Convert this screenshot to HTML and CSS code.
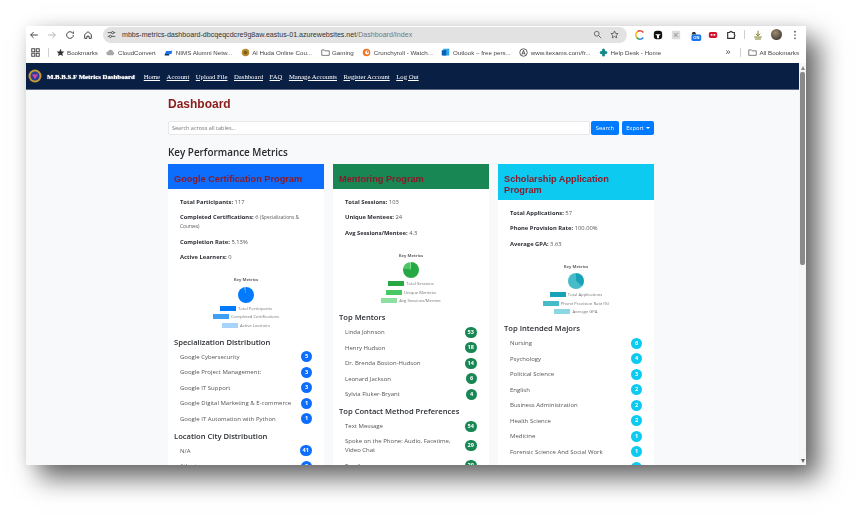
FILE: index.html
```html
<!DOCTYPE html>
<html lang="en">
<head>
    <meta charset="UTF-8">
    <meta content="width=device-width, initial-scale=1.0" name="viewport">
    <link rel="stylesheet" href="styles.css">
    <title>M.B.B.S.F Metrics Dashboard</title>
</head>
<body>

<div class="window">
    <!-- Browser toolbar -->
    <div class="toolbar">
        <svg class="tool-icon" viewBox="0 0 12 12"><path d="M10.5 6H2M5.5 2.5 2 6l3.500 3.500"/></svg>
        <svg class="tool-icon faint" viewBox="0 0 12 12"><path d="M1.500 6H10M6.500 2.500 10 6l-3.500 3.500"/></svg>
        <svg class="tool-icon" viewBox="0 0 12 12"><path d="M10 6a4 4 0 1 1-1.200-2.800L10 4.500V1.800"/></svg>
        <svg class="tool-icon" viewBox="0 0 12 12"><path d="M2 5.500 6 2l4 3.500V10H7.300V7.300H4.700V10H2z"/></svg>
        <div class="url-bar">
            <svg class="url-tune" viewBox="0 0 12 12"><path d="M1 3.500h5M9 3.500h2M3 8.500H1M6 8.500h5"/><circle cx="7.500" cy="3.500" r="1.500"/><circle cx="4.500" cy="8.500" r="1.500"/></svg>
            <span class="url-host">mbbs-metrics-dashboard-dbcqeqcdcre9g8aw.eastus-01.azurewebsites.net</span><span class="url-path">/Dashboard/Index</span>
            <svg class="url-action search-glass" viewBox="0 0 12 12"><circle cx="5" cy="5" r="3.200"/><path d="M7.500 7.500 11 11"/></svg>
            <svg class="url-action" viewBox="0 0 12 12"><path d="M6 1.300 7.400 4.500l3.400.3-2.600 2.300.8 3.400L6 8.700l-3 1.800.8-3.400L1.200 4.800l3.400-.3z"/></svg>
        </div>
        <div class="extensions">
            <svg class="ext ext-c" viewBox="0 0 12 12"><path class="c-red" d="M10 3A5 5 0 0 0 3 2"/><path class="c-yellow" d="M3 2A5 5 0 0 0 2 9"/><path class="c-green" d="M2 9a5 5 0 0 0 4 2"/><path class="c-blue" d="M6 11a5 5 0 0 0 4-2"/></svg>
            <svg class="ext" viewBox="0 0 12 12"><rect class="fill-black" x="1" y="1" width="10" height="10" rx="3.500"/><path class="fill-white" d="M2.500 5h7L7.200 7V10H4.800V7z"/></svg>
            <svg class="ext" viewBox="0 0 12 12"><rect class="fill-grey" x="1" y="1" width="10" height="10" rx="1.500"/><path class="fill-midgrey" d="M4 3.500h1.500v2L7.500 3.500H9L6.800 6 9 8.500H7.500l-2-2v2H4z"/></svg>
            <svg class="ext ext-wide" viewBox="0 0 16 14"><path class="fill-dark" d="M3 5l1.500-3h3L9 5z"/><rect class="fill-blue" x="3" y="5" width="12" height="8" rx="2"/><text class="ext-on" x="9" y="11.200">ON</text></svg>
            <svg class="ext" viewBox="0 0 12 12"><rect class="fill-red" x="1" y="2.500" width="10" height="7" rx="2"/><rect class="fill-white" x="3.300" y="4.800" width="2" height="2"/><rect class="fill-white" x="6.700" y="4.800" width="2" height="2"/></svg>
            <svg class="ext ext-puzzle" viewBox="0 0 12 12"><path d="M2 3h2.500a1.500 1.500 0 0 1 3 0H10v2.500a1.500 1.500 0 0 1 0 2.500V10H2z"/></svg>
            <span class="divider"></span>
            <svg class="ext ext-download" viewBox="0 0 12 12"><path d="M6 1v5.500M3.500 4.500 6 7l2.500-2.500M1.500 8.500h9M2.500 10.800h7"/></svg>
            <span class="avatar"></span>
            <svg class="ext ext-dots" viewBox="0 0 12 12"><circle cx="6" cy="2" r="1"/><circle cx="6" cy="6" r="1"/><circle cx="6" cy="10" r="1"/></svg>
        </div>
    </div>

    <!-- Bookmarks bar -->
    <div class="bookmarks">
        <svg class="bm-apps" viewBox="0 0 12 12"><rect x="1" y="1" width="4" height="4"/><rect x="7" y="1" width="4" height="4"/><rect x="1" y="7" width="4" height="4"/><rect x="7" y="7" width="4" height="4"/></svg>
        <span class="divider bm-sep"></span>
        <a class="bm"><svg class="bm-icon" viewBox="0 0 12 12"><path class="fill-dark" d="M6 1 7.500 4.500l3.700.3-2.800 2.400.9 3.600L6 8.900l-3.300 1.900.9-3.600L.8 4.800l3.700-.3z"/></svg>Bookmarks</a>
        <a class="bm"><svg class="bm-icon" viewBox="0 0 12 12"><path class="fill-midgrey" d="M3 9.500a2.500 2.500 0 0 1-.3-5A3.500 3.500 0 0 1 9.400 5a2.300 2.300 0 0 1-.4 4.500z"/></svg>CloudConvert</a>
        <a class="bm"><svg class="bm-icon" viewBox="0 0 12 12"><path class="fill-blue" d="M1 8 3 4h6l2-1-1 5z"/><rect class="fill-navy" x="1" y="8" width="6" height="2"/></svg>NIMS Alumni Netw...</a>
        <a class="bm"><svg class="bm-icon" viewBox="0 0 12 12"><circle class="fill-gold" cx="6" cy="6" r="5"/><circle class="fill-darkgold" cx="6" cy="6" r="2.500"/></svg>Al Huda Online Cou...</a>
        <a class="bm"><svg class="bm-icon bm-folder" viewBox="0 0 12 12"><path d="M1 2.500h3.500l1 1.300H11v6H1z"/></svg>Gaming</a>
        <a class="bm"><svg class="bm-icon" viewBox="0 0 12 12"><circle class="fill-orange" cx="6" cy="6" r="5"/><circle class="fill-white" cx="6.800" cy="6" r="2.600"/><circle class="fill-orange" cx="7.600" cy="5.200" r="1.200"/></svg>Crunchyroll - Watch...</a>
        <a class="bm"><svg class="bm-icon" viewBox="0 0 12 12"><rect class="fill-lightblue" x="3" y="1" width="8" height="9"/><rect class="fill-outlook" x="1" y="3" width="6" height="7"/></svg>Outlook – free pers...</a>
        <a class="bm"><svg class="bm-icon bm-ring" viewBox="0 0 12 12"><circle cx="6" cy="6" r="5"/><path d="M3.800 9 6 3l2.200 6M4.600 7h2.800"/></svg>www.itexams.com/fr...</a>
        <a class="bm"><svg class="bm-icon" viewBox="0 0 12 12"><circle class="fill-teal" cx="6" cy="6" r="3"/><circle class="fill-teal" cx="6" cy="2.800" r="2"/><circle class="fill-teal" cx="6" cy="9.200" r="2"/><circle class="fill-teal" cx="3" cy="6" r="2"/><circle class="fill-teal" cx="9" cy="6" r="2"/></svg>Help Desk - Home</a>
        <span class="bm-more">»</span>
        <span class="divider bm-sep"></span>
        <a class="bm bm-all"><svg class="bm-icon bm-folder" viewBox="0 0 12 12"><path d="M1 2.500h3.500l1 1.300H11v6H1z"/></svg>All Bookmarks</a>
    </div>

    <div class="viewport">
        <div class="page">
            <!-- Site navbar -->
            <nav class="navbar">
                <svg class="brand-logo" viewBox="0 0 14 14"><circle class="logo-ring" cx="7" cy="7" r="6.500"/><circle class="logo-blue" cx="7" cy="7" r="4.500"/><path class="logo-pink" d="M4 5.500h6L7 10z"/></svg>
                <span class="brand">M.B.B.S.F Metrics Dashboard</span>
                <a class="nav-link">Home</a>
                <a class="nav-link">Account</a>
                <a class="nav-link">Upload File</a>
                <a class="nav-link">Dashboard</a>
                <a class="nav-link">FAQ</a>
                <a class="nav-link">Manage Accounts</a>
                <a class="nav-link">Register Account</a>
                <a class="nav-link">Log Out</a>
            </nav>

            <main class="content">
                <h1 class="page-title">Dashboard</h1>

                <div class="search-row">
                    <input class="search-input" placeholder="Search across all tables...">
                    <button class="btn">Search</button>
                    <button class="btn btn-export">Export<span class="caret"></span></button>
                </div>

                <h2 class="section-title">Key Performance Metrics</h2>

                <div class="cards">
                    <!-- Google -->
                    <section class="card card-blue">
                        <h3 class="card-header">Google Certification Program</h3>
                        <div class="metrics">
                            <p><b>Total Participants:</b> 117</p>
                            <p><b>Completed Certifications:</b> 6 <small>(Specializations &amp; Courses)</small></p>
                            <p><b>Completion Rate:</b> 5.13%</p>
                            <p><b>Active Learners:</b> 0</p>
                        </div>
                        <div class="chart">
                            <div class="chart-title">Key Metrics</div>
                            <div class="pie"></div>
                            <div class="legend"><i class="swatch s1"></i>Total Participants</div>
                            <div class="legend"><i class="swatch s2"></i>Completed Certifications</div>
                            <div class="legend"><i class="swatch s3"></i>Active Learners</div>
                        </div>
                        <h4 class="list-title">Specialization Distribution</h4>
                        <ul class="list">
                            <li>Google Cybersecurity<span class="badge">5</span></li>
                            <li>Google Project Management:<span class="badge">3</span></li>
                            <li>Google IT Support<span class="badge">3</span></li>
                            <li>Google Digital Marketing &amp; E-commerce<span class="badge">1</span></li>
                            <li>Google IT Automation with Python<span class="badge">1</span></li>
                        </ul>
                        <h4 class="list-title">Location City Distribution</h4>
                        <ul class="list">
                            <li>N/A<span class="badge">41</span></li>
                            <li>Atlanta<span class="badge">9</span></li>
                        </ul>
                    </section>

                    <!-- Mentoring -->
                    <section class="card card-green">
                        <h3 class="card-header">Mentoring Program</h3>
                        <div class="metrics">
                            <p><b>Total Sessions:</b> 103</p>
                            <p><b>Unique Mentees:</b> 24</p>
                            <p><b>Avg Sessions/Mentee:</b> 4.3</p>
                        </div>
                        <div class="chart">
                            <div class="chart-title">Key Metrics</div>
                            <div class="pie"></div>
                            <div class="legend"><i class="swatch s1"></i>Total Sessions</div>
                            <div class="legend"><i class="swatch s2"></i>Unique Mentees</div>
                            <div class="legend"><i class="swatch s3"></i>Avg Sessions/Mentee</div>
                        </div>
                        <h4 class="list-title">Top Mentors</h4>
                        <ul class="list">
                            <li>Linda Johnson<span class="badge">53</span></li>
                            <li>Henry Hudson<span class="badge">18</span></li>
                            <li>Dr. Brenda Boston-Hudson<span class="badge">14</span></li>
                            <li>Leonard Jackson<span class="badge">6</span></li>
                            <li>Sylvia Fluker-Bryant<span class="badge">4</span></li>
                        </ul>
                        <h4 class="list-title">Top Contact Method Preferences</h4>
                        <ul class="list">
                            <li>Text Message<span class="badge">54</span></li>
                            <li><span class="li-wrap">Spoke on the Phone: Audio, Facetime, Video Chat</span><span class="badge">29</span></li>
                            <li>Email<span class="badge">20</span></li>
                        </ul>
                    </section>

                    <!-- Scholarship -->
                    <section class="card card-cyan">
                        <h3 class="card-header">Scholarship Application Program</h3>
                        <div class="metrics">
                            <p><b>Total Applications:</b> 57</p>
                            <p><b>Phone Provision Rate:</b> 100.00%</p>
                            <p><b>Average GPA:</b> 3.63</p>
                        </div>
                        <div class="chart">
                            <div class="chart-title">Key Metrics</div>
                            <div class="pie"></div>
                            <div class="legend"><i class="swatch s1"></i>Total Applications</div>
                            <div class="legend"><i class="swatch s2"></i>Phone Provision Rate (%)</div>
                            <div class="legend"><i class="swatch s3"></i>Average GPA</div>
                        </div>
                        <h4 class="list-title">Top Intended Majors</h4>
                        <ul class="list">
                            <li>Nursing<span class="badge">6</span></li>
                            <li>Psychology<span class="badge">4</span></li>
                            <li>Political Science<span class="badge">3</span></li>
                            <li>English<span class="badge">2</span></li>
                            <li>Business Administration<span class="badge">2</span></li>
                            <li>Health Science<span class="badge">2</span></li>
                            <li>Medicine<span class="badge">1</span></li>
                            <li>Forensic Science And Social Work<span class="badge">1</span></li>
                            <li>Biology and Adolescent Health<span class="badge">1</span></li>
                        </ul>
                    </section>
                </div>
            </main>
        </div>

        <!-- Scrollbar -->
        <div class="scrollbar">
            <span class="arrow-up"></span>
            <span class="thumb"></span>
            <span class="arrow-down"></span>
        </div>
    </div>
</div>

</body>
</html>
```

FILE: styles.css
```css
html, body {
    height: 100%;
}

body {
    margin: 0;
    padding: 26px 0 0 26px;
    box-sizing: border-box;
    overflow: hidden;
    background-color: #ffffff;
    font-family: "Open Sans", "Noto Sans", sans-serif;
}

.window {
    display: flex;
    flex-direction: column;
    width: 780px;
    height: 439px;
    overflow: hidden;
    background-color: #ffffff;
    box-shadow: 13px 13px 24px rgba(0, 0, 0, 0.6), 0 0 16px rgba(0, 0, 0, 0.08);
    filter: blur(0.35px);
}

/* Browser toolbar */
.toolbar {
    display: flex;
    align-items: center;
    height: 17px;
    padding-left: 3px;
    gap: 8px;
}

.tool-icon {
    flex: none;
    width: 10px;
    height: 10px;
    fill: none;
    stroke: #444;
    stroke-width: 1.2;
}

.tool-icon.faint {
    stroke: #b5b5b5;
}

.url-bar {
    display: flex;
    flex: none;
    align-items: center;
    width: 524px;
    height: 16px;
    margin-left: 2px;
    padding-left: 4px;
    box-sizing: border-box;
    border-radius: 8px;
    background-color: #e2e2e2;
    font-family: "Liberation Sans", sans-serif;
    font-size: 7.100px;
    white-space: nowrap;
}

.url-tune {
    width: 9px;
    height: 9px;
    margin-right: 6px;
    fill: none;
    stroke: #444;
    stroke-width: 1.1;
}

.url-host {
    color: #333;
}

.url-path {
    color: #777;
}

.url-action {
    width: 9px;
    height: 9px;
    margin-right: 8px;
    fill: none;
    stroke: #555;
    stroke-width: 1.1;
}

.search-glass {
    margin-left: auto;
}

.extensions {
    display: flex;
    align-items: center;
    gap: 8px;
}

.ext {
    flex: none;
    width: 10px;
    height: 10px;
}

.ext-wide {
    width: 13px;
    height: 12px;
    margin-top: 2px;
    margin-right: -2px;
}

.ext-on {
    font-family: "Liberation Sans", sans-serif;
    font-size: 5px;
    font-weight: bold;
    fill: #fff;
    text-anchor: middle;
}

.ext-c path {
    fill: none;
    stroke-width: 1.8;
}

.c-red { stroke: #e94235; }
.c-yellow { stroke: #f6b704; }
.c-green { stroke: #34a853; }
.c-blue { stroke: #4285f4; }

.ext-puzzle path {
    fill: #fff;
    stroke: #333;
    stroke-width: 1.4;
}

.ext-download path {
    fill: none;
    stroke: #7d7a26;
    stroke-width: 1.2;
}

.ext-dots circle {
    fill: #444;
}

.avatar {
    flex: none;
    width: 11px;
    height: 11px;
    border-radius: 50%;
    background: radial-gradient(circle at 40% 35%, #a08c6c, #4c443c 70%);
}

.divider {
    flex: none;
    width: 1px;
    height: 9px;
    background-color: #cfcfcf;
}

.fill-black { fill: #111; }
.fill-white { fill: #fff; }
.fill-grey { fill: #dcdcdc; }
.fill-midgrey { fill: #a8a8a8; }
.fill-dark { fill: #333; }
.fill-blue { fill: #1a73e8; }
.fill-red { fill: #d5102a; }
.fill-navy { fill: #17335f; }
.fill-gold { fill: #b58a2e; }
.fill-darkgold { fill: #7f5d1b; }
.fill-orange { fill: #f47521; }
.fill-lightblue { fill: #28a8ea; }
.fill-outlook { fill: #0a5fb4; }
.fill-teal { fill: #128a8a; }

/* Bookmarks bar */
.bookmarks {
    display: flex;
    align-items: center;
    height: 18px;
    padding: 0 7px 2px 5px;
    font-family: "Liberation Sans", sans-serif;
    font-size: 6.200px;
    color: #444;
    white-space: nowrap;
}

.bm-apps {
    flex: none;
    width: 9px;
    height: 9px;
    fill: none;
    stroke: #444;
    stroke-width: 1.3;
}

.bm-sep {
    margin: 0 6.500px 0 8px;
}

.bm {
    display: flex;
    flex: none;
    align-items: center;
    gap: 2.500px;
    margin-right: 8.500px;
}

.bm-icon {
    flex: none;
    width: 9px;
    height: 9px;
}

.bm-folder path {
    fill: none;
    stroke: #555;
    stroke-width: 1;
}

.bm-ring circle,
.bm-ring path {
    fill: none;
    stroke: #333;
    stroke-width: 1;
}

.bm-more {
    margin-left: auto;
    margin-right: 2px;
    font-size: 9px;
}

.bm-all {
    margin-right: 0;
}

/* Page area */
.viewport {
    display: flex;
    flex: 1;
    min-height: 0;
}

.page {
    flex: 1;
    min-width: 0;
    background-color: #f8f9fa;
}

.navbar {
    display: flex;
    align-items: center;
    height: 27px;
    padding-left: 2px;
    gap: 6.500px;
    background-color: #0a1f44;
    border-bottom: 1px solid #5c6a84;
    box-sizing: border-box;
    font-family: "Liberation Serif", serif;
}

.brand-logo {
    flex: none;
    width: 14px;
    height: 14px;
    margin-right: -1.500px;
}

.logo-ring { fill: #c39a33; }
.logo-blue { fill: #2b3f9c; }
.logo-pink { fill: #e0459a; }

.brand {
    margin-right: 2.500px;
    font-size: 6.800px;
    font-weight: bold;
    color: #ffffff;
    text-shadow: 0 0 1px #ffffff;
    white-space: nowrap;
}

.nav-link {
    font-size: 6.700px;
    color: #ffffff;
    text-decoration: underline;
    white-space: nowrap;
}

.content {
    width: 486px;
    margin-left: 142px;
}

.page-title {
    margin: 7px 0 0;
    font-family: "Liberation Sans", sans-serif;
    font-size: 12px;
    line-height: 14px;
    color: #8b1a1a;
}

.search-row {
    display: flex;
    gap: 3px;
    margin-top: 10px;
}

.search-input {
    flex: 1;
    min-width: 0;
    height: 14px;
    margin-right: -2px;
    padding: 0 3px;
    box-sizing: border-box;
    border: 1px solid #e6e8eb;
    border-radius: 2px;
    background-color: #ffffff;
    font-family: "Open Sans", sans-serif;
    font-size: 5.500px;
    outline: none;
}

.search-input::placeholder {
    color: #777;
}

.btn {
    flex: none;
    width: 28px;
    height: 14px;
    padding: 0;
    border: none;
    border-radius: 2px;
    background-color: #007bff;
    color: #ffffff;
    font-family: "Open Sans", sans-serif;
    font-size: 5.800px;
}

.btn-export {
    width: 32px;
}

.caret {
    display: inline-block;
    margin-left: 2px;
    vertical-align: middle;
    border-top: 2px solid #ffffff;
    border-left: 2px solid transparent;
    border-right: 2px solid transparent;
}

.section-title {
    margin: 9.500px 0 5.500px;
    font-size: 9.900px;
    font-weight: 600;
    line-height: 14px;
    color: #26292d;
}

.cards {
    display: flex;
    align-items: flex-start;
    gap: 9px;
}

.card {
    flex: 1;
    min-width: 0;
    background-color: #ffffff;
    padding-bottom: 40px;
}

.card-header {
    margin: 0;
    padding: 9.500px 6px 4.500px;
    font-family: "Liberation Sans", sans-serif;
    font-size: 9.200px;
    line-height: 11px;
    color: #8b1a2a;
}

.card-blue .card-header { background-color: #0d6efd; }
.card-green .card-header { background-color: #198754; }
.card-cyan .card-header { background-color: #0dcaf0; }

.metrics {
    padding: 8.500px 12px 0;
    font-size: 5.800px;
    line-height: 9px;
    color: #555;
}

.metrics p {
    margin: 0 0 6.500px;
}

.metrics b {
    color: #2b2e33;
}

.metrics small {
    font-size: 4.800px;
}

/* Charts */
.chart {
    display: flex;
    flex-direction: column;
    align-items: center;
    padding-top: 8.500px;
    font-size: 4.200px;
    color: #777;
}

.chart-title {
    height: 6px;
    line-height: 6px;
    font-weight: 700;
    color: #666;
}

.pie {
    width: 16px;
    height: 16px;
    margin: 3.500px 0 1.500px;
    border-radius: 50%;
}

.card-blue .pie { background: conic-gradient(#007bff 0 342deg, #3f9ff5 342deg 360deg); }
.card-green .pie { background: conic-gradient(#28a745 0 282deg, #48c863 282deg 348deg, #8fe0a0 348deg 360deg); }
.card-cyan .pie { background: conic-gradient(#17a2b8 0 128deg, #45bcc8 128deg 358deg, #8cd8e2 358deg 360deg); }

.legend {
    display: flex;
    align-items: center;
    gap: 2px;
    height: 8.600px;
    white-space: nowrap;
}

.swatch {
    display: block;
    width: 16px;
    height: 5px;
}

.card-blue .s1 { background-color: #007bff; }
.card-blue .s2 { background-color: #3f9ff5; }
.card-blue .s3 { background-color: #a8d4fb; }
.card-green .s1 { background-color: #28a745; }
.card-green .s2 { background-color: #48c863; }
.card-green .s3 { background-color: #8fe0a0; }
.card-cyan .s1 { background-color: #17a2b8; }
.card-cyan .s2 { background-color: #45bcc8; }
.card-cyan .s3 { background-color: #8cd8e2; }

/* Lists */
.list-title {
    margin: 7px 6px 1px;
    font-size: 7.600px;
    font-weight: 600;
    line-height: 11px;
    color: #2b2e33;
}

.list + .list-title {
    margin-top: 4.500px;
}

.list {
    margin: 0 12px;
    padding: 0;
    list-style: none;
    font-size: 6px;
    color: #555;
}

.list li {
    display: flex;
    align-items: center;
    justify-content: space-between;
    min-height: 15.500px;
}

.li-wrap {
    max-width: 118px;
    padding: 3px 0;
    line-height: 9px;
}

.badge {
    flex: none;
    min-width: 5px;
    height: 11px;
    padding: 0 3px;
    border-radius: 6px;
    font-size: 5.600px;
    font-weight: 700;
    line-height: 11px;
    text-align: center;
    color: #ffffff;
}

.card-blue .badge { background-color: #0d6efd; }
.card-green .badge { background-color: #198754; }
.card-cyan .badge { background-color: #0dcaf0; }

/* Scrollbar */
.scrollbar {
    display: flex;
    flex: none;
    flex-direction: column;
    align-items: center;
    width: 7px;
    background-color: #f6f6f6;
}

.arrow-up {
    margin-top: 3px;
    border-bottom: 4px solid #888;
    border-left: 2.500px solid transparent;
    border-right: 2.500px solid transparent;
}

.thumb {
    width: 5px;
    height: 193px;
    margin-top: 2px;
    border-radius: 2px;
    background-color: #8a8a8a;
}

.arrow-down {
    margin-top: auto;
    margin-bottom: 2px;
    border-top: 4px solid #666;
    border-left: 2.500px solid transparent;
    border-right: 2.500px solid transparent;
}
```
